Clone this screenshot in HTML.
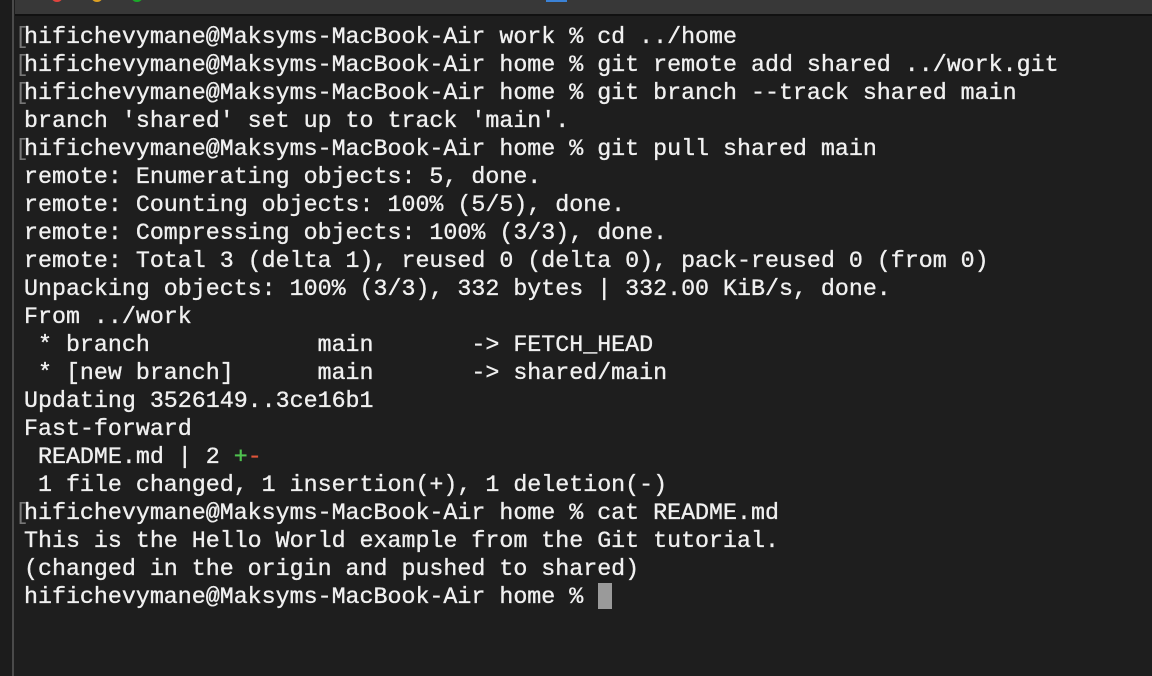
<!DOCTYPE html>
<html><head><meta charset="utf-8"><style>
html,body{margin:0;padding:0;width:1152px;height:676px;overflow:hidden;background:#1e1e1e;}
.left{position:absolute;left:0;top:0;width:14px;height:676px;background:#1c1c1c;border-right:2px solid #4a4a4a;box-sizing:border-box;}
.title{position:absolute;left:15px;top:0;right:0;height:14px;background:#383838;border-bottom:2px solid #111;}
.dot{position:absolute;top:-10px;width:12px;height:12px;border-radius:50%;}
.blue{position:absolute;left:531px;top:0;width:21px;height:2px;background:#3b82d6;}
pre{position:absolute;left:24px;top:23px;margin:0;font-family:"Liberation Mono",monospace;font-size:23.3px;line-height:28px;color:#f0f0f0;letter-spacing:0;-webkit-text-stroke:0.35px #f0f0f0;}
.br{position:absolute;left:15px;font-family:"Liberation Mono",monospace;font-size:23px;line-height:28px;color:#777;}
.g{color:#4fc24f;-webkit-text-stroke:0.35px #4fc24f}.r{color:#e0553a;-webkit-text-stroke:0.35px #e0553a}
.cur{position:absolute;left:598px;top:583px;width:14px;height:26px;background:#9a9a9a;}
</style></head><body>
<div class="left"></div>
<div class="title"><div class="dot" style="left:36px;background:#e0443e"></div><div class="dot" style="left:76px;background:#dea123"></div><div class="dot" style="left:116px;background:#1aab29"></div><div class="blue"></div></div>
<div class="br" style="top:23px">[</div>
<div class="br" style="top:51px">[</div>
<div class="br" style="top:79px">[</div>
<div class="br" style="top:135px">[</div>
<div class="br" style="top:499px">[</div>
<pre>hifichevymane@Maksyms-MacBook-Air work % cd ../home
hifichevymane@Maksyms-MacBook-Air home % git remote add shared ../work.git
hifichevymane@Maksyms-MacBook-Air home % git branch --track shared main
branch 'shared' set up to track 'main'.
hifichevymane@Maksyms-MacBook-Air home % git pull shared main
remote: Enumerating objects: 5, done.
remote: Counting objects: 100% (5/5), done.
remote: Compressing objects: 100% (3/3), done.
remote: Total 3 (delta 1), reused 0 (delta 0), pack-reused 0 (from 0)
Unpacking objects: 100% (3/3), 332 bytes | 332.00 KiB/s, done.
From ../work
 * branch            main       -> FETCH_HEAD
 * [new branch]      main       -> shared/main
Updating 3526149..3ce16b1
Fast-forward
 README.md | 2 <span class="g">+</span><span class="r">-</span>
 1 file changed, 1 insertion(+), 1 deletion(-)
hifichevymane@Maksyms-MacBook-Air home % cat README.md
This is the Hello World example from the Git tutorial.
(changed in the origin and pushed to shared)
hifichevymane@Maksyms-MacBook-Air home % </pre>
<div class="cur"></div>
</body></html>
